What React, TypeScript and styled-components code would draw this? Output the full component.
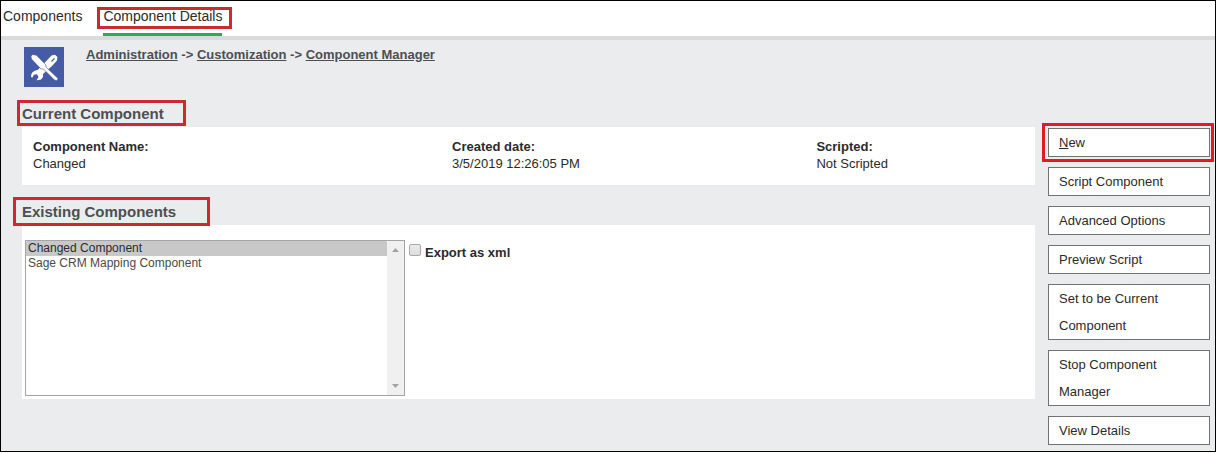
import React from "react";
import styled, { createGlobalStyle } from "styled-components";

const GlobalStyle = createGlobalStyle`
  *, *::before, *::after { box-sizing: border-box; }
  body {
    margin: 0;
    background: #fff;
    color: #2b2b2b;
    font: 13px/17px "Liberation Sans", Arial, sans-serif;
  }
`;

const Frame = styled.div`
  display: flex;
  flex-direction: column;
  min-height: calc(100vh - 1px);
  margin: 0 1px 1px 0;
  border: 1px solid #000;
  background: #ebeced;
`;

const TabBar = styled.nav`
  display: flex;
  gap: 21px;
  padding: 0 2px;
  background: #fff;
  border-bottom: 4px solid #dadada;
`;

const Tab = styled.a<{ $active?: boolean }>`
  position: relative;
  padding: 7px 0 8px;
  border-bottom: 3px solid ${(p) => (p.$active ? "#22b14c" : "transparent")};
  color: #2b2b2b;
  font-size: 14px;
  line-height: 17px;
  text-decoration: none;
`;

/* Red callout drawn around its positioned parent */
const Callout = styled.span<{ $inset: string; $color?: string }>`
  position: absolute;
  inset: ${(p) => p.$inset};
  border: 3px solid ${(p) => p.$color ?? "#cb2a35"};
  pointer-events: none;
`;

const Header = styled.header`
  display: flex;
  gap: 22px;
  padding: 7px 23px 0;
`;

const Logo = styled.svg`
  width: 40px;
  height: 40px;
  background: #465ba6;
`;

const Breadcrumb = styled.div`
  font-weight: bold;
  line-height: 15px;
  color: #4d4f53;

  a { color: inherit; }
`;

const Body = styled.div`
  display: flex;
  gap: 13px;
  padding: 0 5px 6px 21px;
`;

const Main = styled.main`
  flex: 1;
  min-width: 0;
  padding-top: 13px;
`;

const Section = styled.section`
  margin-bottom: 13px;
`;

const SectionTitle = styled.h2`
  position: relative;
  width: fit-content;
  margin: 0;
  padding: 5px 0 4px;
  color: #4d4f53;
  font-size: 15px;
  line-height: 18px;
`;

const Panel = styled.div`
  background: #fff;
`;

const Fields = styled.dl`
  display: grid;
  grid-template-columns: 23fr 20fr 12fr;
  margin: 0;
  padding: 11px 0 13px 11px;

  dt { font-weight: bold; }
  dd { margin: 0; }
`;

const ListRow = styled.div`
  display: flex;
  align-items: flex-start;
  gap: 4px;
  padding: 15px 3px 3px;
`;

const ListBox = styled.div`
  display: flex;
  width: 380px;
  height: 156px;
  border: 1px solid #a5a5a5;
`;

const List = styled.select`
  flex: 1;
  min-width: 0;
  padding: 0;
  border: 0;
  outline: 0;
  background: #fff;
  font: 12px/15px "Liberation Sans", Arial, sans-serif;
  overflow: hidden;
  scrollbar-width: none;

  option {
    min-height: 15px;
    padding: 0 2px;
    color: #4a4a4a;
    line-height: 15px;
  }
  option:checked {
    background: #c8c8c8 linear-gradient(#c8c8c8, #c8c8c8);
    color: #2b2b2b;
  }
`;

const ScrollTrack = styled.div`
  display: flex;
  flex-direction: column;
  justify-content: space-between;
  align-items: center;
  width: 17px;
  padding: 7px 0;
  background: #f0f0f0;
`;

const Arrow = styled.svg`
  width: 7px;
  height: 4px;
  fill: #a3a3a3;
`;

const CheckLabel = styled.label`
  display: flex;
  gap: 4px;
  padding-top: 4px;
  font-weight: bold;
`;

const Checkbox = styled.input`
  appearance: none;
  width: 12px;
  height: 12px;
  margin: 0;
  border: 1px solid #a9a9a9;
  border-radius: 2px;
  background: linear-gradient(#ececec, #dcdcdc);

  &:checked { background: #6b7bb5; }
`;

const Actions = styled.aside`
  display: flex;
  flex-direction: column;
  gap: 10px;
  width: 162px;
  padding-top: 41px;
`;

const ActionButton = styled.button`
  position: relative;
  padding: 0 30px 0 10px;
  border: 1px solid #727272;
  background: #fff;
  color: #2b2b2b;
  font: 13px/27px "Liberation Sans", Arial, sans-serif;
  text-align: left;
  cursor: pointer;
`;

const fields = [
  ["Component Name:", "Changed"],
  ["Created date:", "3/5/2019 12:26:05 PM"],
  ["Scripted:", "Not Scripted"],
];

const actions = [
  "Script Component",
  "Advanced Options",
  "Preview Script",
  "Set to be Current Component",
  "Stop Component Manager",
  "View Details",
];

function ToolsLogo() {
  return (
    <Logo viewBox="0 0 40 40" aria-hidden="true">
      <path
        fill="#fff"
        d="M27.500 8.500L31 7.800L33.400 10L33 13.500L28 19L19 27Q19.600 31 16.500 32.800L12.500 33.200L14.500 30L13 27.200L9.800 27.800L8.500 30.500L7 30Q6.500 24 14 22.800Z"
      />
      <path stroke="#465ba6" strokeWidth="1.200" d="M27.500 14.500l3-3.200" />
      <path
        fill="#fff"
        stroke="#465ba6"
        strokeWidth="0.600"
        d="M7 9.500L8.500 7.500L12.500 8.300L22 18L22 20L34 31.500L32.800 33.700L30.500 33L19.500 22L17 22L7.500 12Z"
      />
    </Logo>
  );
}

export default function App() {
  return (
    <>
      <GlobalStyle />
      <Frame>
        <TabBar>
          <Tab href="#components">Components</Tab>
          <Tab href="#details" $active aria-current="page">
            Component Details
            <Callout $inset="6px -10px 4px -6px" />
          </Tab>
        </TabBar>
        <Header>
          <ToolsLogo />
          <Breadcrumb>
            <a href="#administration">Administration</a> -&gt;{" "}
            <a href="#customization">Customization</a> -&gt;{" "}
            <a href="#manager">Component Manager</a>
          </Breadcrumb>
        </Header>
        <Body>
          <Main>
            <Section>
              <SectionTitle>
                Current Component
                <Callout $inset="0 -22px 1px -5px" />
              </SectionTitle>
              <Panel>
                <Fields>
                  {fields.map(([name, value]) => (
                    <div key={name}>
                      <dt>{name}</dt>
                      <dd>{value}</dd>
                    </div>
                  ))}
                </Fields>
              </Panel>
            </Section>
            <Section>
              <SectionTitle>
                Existing Components
                <Callout $inset="-1px -34px -1px -9px" />
              </SectionTitle>
              <Panel>
                <ListRow>
                  <ListBox>
                    <List size={10} defaultValue="changed" aria-label="Existing Components">
                      <option value="changed">Changed Component</option>
                      <option value="mapping">Sage CRM Mapping Component</option>
                    </List>
                    <ScrollTrack aria-hidden="true">
                      <Arrow viewBox="0 0 7 4"><path d="M0 4L3.500 0L7 4z" /></Arrow>
                      <Arrow viewBox="0 0 7 4"><path d="M0 0L3.500 4L7 0z" /></Arrow>
                    </ScrollTrack>
                  </ListBox>
                  <CheckLabel>
                    <Checkbox type="checkbox" />
                    Export as xml
                  </CheckLabel>
                </ListRow>
              </Panel>
            </Section>
          </Main>
          <Actions>
            <ActionButton type="button" accessKey="n">
              <u>N</u>ew
              <Callout $inset="-6px -5px -6px -7px" $color="#e11b26" />
            </ActionButton>
            {actions.map((label) => (
              <ActionButton key={label} type="button">{label}</ActionButton>
            ))}
          </Actions>
        </Body>
      </Frame>
    </>
  );
}
